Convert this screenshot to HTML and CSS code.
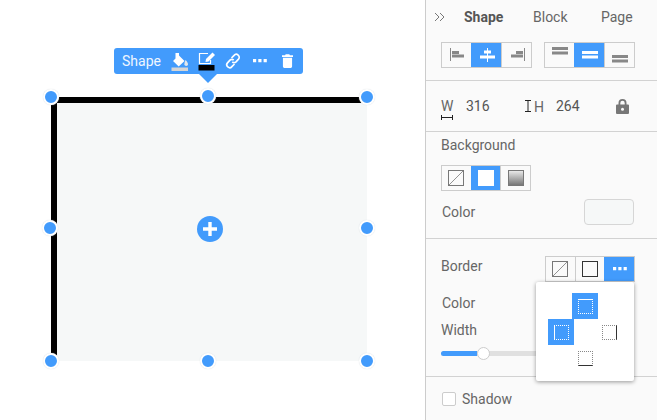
FILE: index.html
```html
<!DOCTYPE html>
<html lang="en">
<head>
<meta charset="utf-8">
<title>Shape editor</title>
<link rel="stylesheet" href="styles.css">
</head>
<body>
<div class="app">
  <main class="canvas">
    <div class="shape"></div>
    <div class="toolbar">
      <span class="tool-label">Shape</span>
      <svg class="tool tool-fill" width="18" height="20" viewBox="0 0 18 20"><path d="M4.500 1h3.500v2.500l5.500 5.500-5.800 5.500-5.700-5.500 2.500-2.500z" fill="#fff"/><path d="M14.500 8c1.500 1.500 2.500 3 2.500 4.200a1.800 1.800 0 0 1-3.600 0c0-1 .4-2.600 1.100-4.200z" fill="#e3e8ec"/><rect x="0.500" y="15.500" width="16.500" height="3.500" fill="#d5d5d5"/></svg>
      <svg class="tool tool-border" width="18" height="20" viewBox="0 0 18 20"><path d="M10 1.500H1.500v10h11V8" fill="none" stroke="#fff" stroke-width="1.200"/><path d="M14.500 .5l2.500 2.500-6.500 6.500-3 .5.500-3z" fill="#fff"/><rect x="0.500" y="13" width="16" height="5.500" fill="#000"/></svg>
      <svg class="tool tool-link" width="16" height="16" viewBox="0 0 16 16"><g fill="none" stroke="#fff" stroke-width="1.700"><path d="M6.500 5l2.600-2.600a2.600 2.600 0 0 1 4.400 3.700L11 8.800a2.600 2.600 0 0 1-3.700 0"/><path d="M9.500 11l-2.600 2.600a2.600 2.600 0 0 1-4.400-3.700L5 7.200a2.600 2.600 0 0 1 3.700 0"/></g></svg>
      <svg class="tool tool-dots" width="14" height="4" viewBox="0 0 14 4"><path d="M0 0h3.200v3.200H0zM5.300 0h3.200v3.200H5.300zM10.600 0h3.200v3.200h-3.200z" fill="#fff"/></svg>
      <svg class="tool tool-trash" width="11" height="14" viewBox="0 0 12 15"><path d="M4 0h4l.6 1.300H12v1.700H0V1.300h3.400zM1 4h10v9.500A1.500 1.500 0 0 1 9.500 15h-7A1.500 1.500 0 0 1 1 13.500z" fill="#fff"/></svg>
    </div>
    <span class="handle h-tl"></span><span class="handle h-tc"></span><span class="handle h-tr"></span>
    <span class="handle h-ml"></span><span class="handle h-mr"></span>
    <span class="handle h-bl"></span><span class="handle h-bc"></span><span class="handle h-br"></span>
    <svg class="plus" width="26" height="26" viewBox="0 0 26 26"><circle cx="13" cy="13" r="13" fill="#429bfc"/><path d="M11.300 6h3.400v5.300H20v3.400h-5.300V20h-3.400v-5.300H6v-3.400h5.300z" fill="#fff"/></svg>
  </main>

  <aside class="panel">
    <section class="sec sec-top">
      <nav class="tabs">
        <svg class="collapse" width="11" height="10" viewBox="0 0 11 10"><path d="M1 1l4 4-4 4M6 1l4 4-4 4" fill="none" stroke="#777" stroke-width="1"/></svg>
        <span class="tab tab-shape">Shape</span>
        <span class="tab tab-block">Block</span>
        <span class="tab tab-page">Page</span>
      </nav>
      <div class="aligns">
        <div class="btn-group">
          <button class="btn"><svg width="18" height="14" viewBox="0 0 18 14"><path d="M2.500 0v13" stroke="#888" stroke-width="1"/><path d="M4 3h7v3H4zM4 6.500h12v3H4z" fill="#888"/></svg></button>
          <button class="btn on"><svg width="18" height="14" viewBox="0 0 18 14"><path d="M9.500 0v14" stroke="#fff" stroke-width="1"/><path d="M6 2.500h7v3H6zM2 7.500h15v3H2z" fill="#fff"/></svg></button>
          <button class="btn"><svg width="18" height="14" viewBox="0 0 18 14"><path d="M16.500 0v13" stroke="#888" stroke-width="1"/><path d="M8 3h7v3H8zM3 6.500h12v3H3z" fill="#888"/></svg></button>
        </div>
        <div class="btn-group">
          <button class="btn valign-t"><svg width="16" height="8" viewBox="0 0 16 8"><path d="M0 0h16v3H0zM0 4.500h16v3H0z" fill="#888"/></svg></button>
          <button class="btn on"><svg width="16" height="8" viewBox="0 0 16 8"><path d="M0 0h16v3H0zM0 4.500h16v3H0z" fill="#fff"/></svg></button>
          <button class="btn valign-b"><svg width="16" height="8" viewBox="0 0 16 8"><path d="M0 0h16v3H0zM0 4.500h16v3H0z" fill="#888"/></svg></button>
        </div>
      </div>
    </section>

    <section class="sec sec-dims">
      <span class="dim-w">W<svg width="12" height="5" viewBox="0 0 12 5"><path d="M.5 0v5M11.500 0v5M0 2.500h12" stroke="#222" stroke-width="1"/></svg></span>
      <span class="dim-val">316</span>
      <svg class="dim-i" width="6" height="12" viewBox="0 0 6 12"><path d="M0 .5h6M0 11.500h6M3 0v12" stroke="#222" stroke-width="1"/></svg>
      <span class="dim-h">H</span>
      <span class="dim-val dim-val-h">264</span>
      <svg class="lock" width="13" height="15" viewBox="0 0 13 15"><path d="M2.500 5.500V4a4 4 0 0 1 8 0v1.500H12a1 1 0 0 1 1 1V14a1 1 0 0 1-1 1H1a1 1 0 0 1-1-1V6.500a1 1 0 0 1 1-1zM4.300 5.500h4.400V4a2.200 2.200 0 0 0-4.400 0z" fill="#777"/><circle cx="6.500" cy="10.200" r="1.500" fill="#fafafa"/></svg>
    </section>

    <section class="sec sec-bg">
      <div class="label">Background</div>
      <div class="btn-group bg-group">
        <button class="btn"><svg width="16" height="16" viewBox="0 0 16 16"><rect x=".5" y=".5" width="15" height="15" fill="#fafafa" stroke="#777"/><path d="M1 15L15 1" stroke="#777" stroke-width=".8"/></svg></button>
        <button class="btn on"><span class="swatch-solid"></span></button>
        <button class="btn"><span class="swatch-grad"></span></button>
      </div>
      <div class="row-color">
        <span class="label">Color</span>
        <span class="color-well"></span>
      </div>
    </section>

    <section class="sec sec-border">
      <div class="border-head">
        <span class="label">Border</span>
        <div class="btn-group border-group">
          <button class="btn"><svg width="16" height="16" viewBox="0 0 16 16"><rect x=".5" y=".5" width="15" height="15" fill="#fafafa" stroke="#777"/><path d="M1 15L15 1" stroke="#777" stroke-width=".8"/></svg></button>
          <button class="btn"><span class="swatch-line"></span></button>
          <button class="btn on"><svg width="14" height="4" viewBox="0 0 14 4"><path d="M0 0h3.200v3.200H0zM5.300 0h3.200v3.200H5.300zM10.600 0h3.200v3.200h-3.200z" fill="#fff"/></svg></button>
        </div>
      </div>
      <div class="label label-bcolor">Color</div>
      <div class="label label-width">Width</div>
      <div class="slider"><span class="slider-fill"></span><span class="slider-thumb"></span></div>
    </section>

    <section class="sec-shadow">
      <span class="checkbox"></span>
      <span class="label">Shadow</span>
    </section>

    <div class="popup">
      <div class="popup-grid">
        <span class="cell cell-top on"><i class="edge edge-t"></i></span>
        <span class="cell cell-left on"><i class="edge edge-l"></i></span>
        <span class="cell cell-right"><i class="edge edge-r"></i></span>
        <span class="cell cell-bottom"><i class="edge edge-b"></i></span>
      </div>
    </div>
  </aside>
</div>
</body>
</html>
```
FILE: styles.css
```css
* { box-sizing: border-box; }
html, body { margin: 0; padding: 0; background: #fff; }
body { font-family: Roboto, "Liberation Sans", sans-serif; font-size: 14px; color: #555; }
.app { display: flex; width: 657px; height: 420px; overflow: hidden; }

.canvas { position: relative; width: 425px; height: 420px; background: #fff; flex: none; }
.shape { position: absolute; left: 51px; top: 97px; width: 316px; height: 264px; background: #f6f8f8; border-top: 6px solid #000; border-left: 6px solid #000; }
.toolbar { position: absolute; left: 114px; top: 48px; width: 189px; height: 26px; background: #429bfc; border-radius: 3px; display: flex; align-items: center; color: #fff; }
.toolbar::after { content: ""; position: absolute; left: 85px; top: 26px; border-left: 9px solid transparent; border-right: 9px solid transparent; border-top: 9px solid #429bfc; }
.tool-label { margin-left: 8px; width: 49px; font-size: 14px; color: #eef6ff; }
.tool { display: block; flex: none; }
.tool-fill { margin-top: 2px; }
.tool-border { margin-left: 9px; margin-top: 2px; }
.tool-link { margin-left: 9px; }
.tool-dots { margin-left: 12px; }
.tool-trash { margin-left: 15px; }

.handle { position: absolute; width: 16px; height: 16px; border-radius: 50%; background: #429bfc; border: 2px solid #fff; box-shadow: 0 0 1px #cfd6dc; }
.h-tl { left: 43px; top: 89px; }
.h-tc { left: 200px; top: 88px; }
.h-tr { left: 359px; top: 89px; }
.h-ml { left: 42px; top: 220px; }
.h-mr { left: 359px; top: 220px; }
.h-bl { left: 43px; top: 353px; }
.h-bc { left: 200px; top: 353px; }
.h-br { left: 359px; top: 353px; }
.plus { position: absolute; left: 197px; top: 216px; }

.panel { position: relative; flex: 1; height: 420px; background: #fafafa; border-left: 1px solid #ccc; }
.sec { border-bottom: 1px solid #d2d2d2; }
.sec-top { height: 81px; padding: 0 0 0 15px; }
.tabs { height: 42px; position: relative; font-size: 14px; }
.collapse { position: absolute; left: -7px; top: 12px; }
.tab { position: absolute; top: 8px; line-height: 18px; color: #666; }
.tab-shape { left: 23px; font-weight: 700; color: #555; }
.tab-block { left: 92px; }
.tab-page { left: 160px; }
.aligns { display: flex; gap: 12px; }
.btn-group { display: flex; height: 26px; border: 1px solid #ccc; width: 91px; background: #fafafa; }
.btn { flex: 1; min-width: 0; padding: 0; border: 0; border-left: 1px solid #ccc; background: transparent; display: flex; align-items: center; justify-content: center; }
.btn:first-child { border-left: 0; }
.btn.on { background: #429bfc; border-left-color: #429bfc; }
.btn svg { display: block; }
.valign-t { align-items: flex-start; padding-top: 4px; }
.valign-b { align-items: flex-end; padding-bottom: 4px; }

.sec-dims { height: 51px; display: flex; align-items: flex-start; position: relative; padding: 17px 0 0 15px; }
.dim-w { width: 25px; display: flex; flex-direction: column; line-height: 16px; color: #666; }
.dim-w svg { display: block; margin-top: 1px; }
.dim-val { width: 59px; line-height: 16px; }
.dim-i { margin-top: 2px; flex: none; }
.dim-h { margin-left: 3px; width: 22px; line-height: 18px; color: #666; }
.dim-val-h { width: 60px; }
.lock { margin-top: 1px; }

.sec-bg { height: 107px; padding: 4px 0 0 15px; }
.label { line-height: 18px; color: #666; }
.bg-group { margin-top: 11px; width: 90px; }
.swatch-solid { display: block; width: 16px; height: 16px; background: #fff; }
.swatch-grad { display: block; width: 16px; height: 16px; border: 1px solid #777; background: linear-gradient(#e8e8e8, #777); }
.swatch-line { display: block; width: 16px; height: 16px; border: 1px solid #333; }
.row-color { display: flex; justify-content: space-between; align-items: center; margin-top: 8px; padding: 0 23px 0 1px; }
.color-well { width: 50px; height: 26px; background: #f6f8f8; border: 1px solid #d6d6d6; border-radius: 4px; }

.sec-border { height: 138px; padding: 17px 0 0 15px; }
.border-head { display: flex; justify-content: space-between; padding-right: 22px; align-items: flex-start; }
.border-head .label { margin-top: 1px; }
.border-group { width: 90px; }
.label-bcolor { margin-top: 12px; margin-left: 1px; }
.label-width { margin-top: 9px; }
.slider { position: relative; height: 5px; width: 100px; margin-top: 12px; background: #e0e0e0; border-radius: 3px; }
.slider-fill { position: absolute; left: 0; top: 0; height: 5px; width: 36px; background: #429bfc; border-radius: 3px 0 0 3px; }
.slider-thumb { position: absolute; left: 36px; top: -4px; width: 13px; height: 13px; background: #fff; border: 1px solid #ccc; border-radius: 50%; }

.sec-shadow { display: flex; align-items: center; padding: 13px 0 0 16px; gap: 6px; }
.checkbox { width: 14px; height: 14px; background: #fff; border: 1px solid #ccc; border-radius: 2px; }

.popup { position: absolute; left: 110px; top: 282px; width: 98px; height: 99px; background: #fff; border-radius: 2px; box-shadow: 0 1px 4px rgba(0,0,0,.4); padding: 11px 0 0 13px; }
.popup-grid { display: grid; grid-template-columns: repeat(3, 24px); grid-template-rows: repeat(3, 26px); }
.cell { width: 26px; height: 26px; margin-left: -1px; display: flex; align-items: center; justify-content: center; }
.cell.on { background: #429bfc; }
.cell-top { grid-column: 2; grid-row: 1; }
.cell-left { grid-column: 1; grid-row: 2; }
.cell-right { grid-column: 3; grid-row: 2; }
.cell-bottom { grid-column: 2; grid-row: 3; }
.edge { display: block; width: 15px; height: 15px; border: 1px dotted #888; }
.cell.on .edge { border-color: #fff; }
.edge-t { border-top: 1px solid #fff; }
.edge-l { border-left: 1px solid #fff; }
.edge-r { border-right: 1px solid #333; }
.edge-b { border-bottom: 1px solid #333; }
```
